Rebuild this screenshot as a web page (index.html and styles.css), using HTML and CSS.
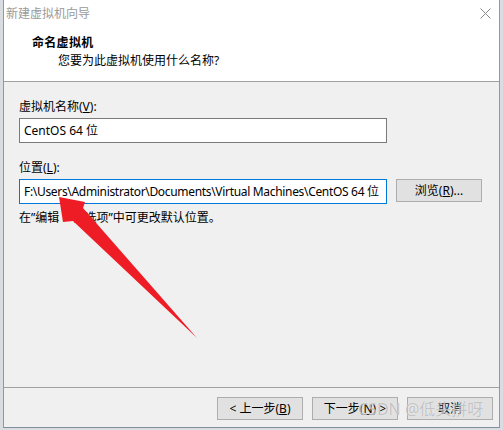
FILE: index.html
```html
<!DOCTYPE html>
<html lang="zh-CN">
<head>
<meta charset="utf-8">
<title>新建虚拟机向导</title>
<link rel="stylesheet" href="styles.css">
</head>
<body>
<div class="screen">
  <div class="window">
    <div class="titlebar">
      <span class="title-text">新建虚拟机向导</span>
      <svg class="close" width="11" height="11" viewBox="0 0 11 11"><path d="M0.5 0.5 L10.5 10.5 M10.5 0.5 L0.5 10.5" stroke="#8a8a8a" stroke-width="1" fill="none"/></svg>
    </div>
    <div class="header">
      <div class="header-title">命名虚拟机</div>
      <div class="header-sub">您要为此虚拟机使用什么名称?</div>
    </div>
    <div class="content">
      <div class="field">
        <div class="label">虚拟机名称(<u>V</u>):</div>
        <div class="input">CentOS 64 位</div>
      </div>
      <div class="field field-loc">
        <div class="label">位置(<u>L</u>):</div>
        <div class="row">
          <div class="input focus">F:\Users\Administrator\Documents\Virtual Machines\CentOS 64 位</div>
          <div class="btn browse">浏览(<u>R</u>)...</div>
        </div>
      </div>
      <div class="hint">在”编辑 &gt; 首选项”中可更改默认位置。</div>
    </div>
    <div class="footer">
      <div class="btn">&lt; 上一步(<u>B</u>)</div>
      <div class="btn">下一步(<u>N</u>) &gt;</div>
      <div class="btn">取消</div>
    </div>
  </div>
  <svg class="arrow" width="503" height="430" viewBox="0 0 503 430">
    <polygon points="59,197 85,202 83,208 197,338 73,221 63,222" fill="#ee1c25"/>
  </svg>
  <div class="watermark">CSDN @低头拼呀</div>
</div>
</body>
</html>
```
FILE: styles.css
```css
html, body {
  margin: 0;
  padding: 0;
}
body {
  width: 503px;
  height: 430px;
  overflow: hidden;
  font-family: "Noto Sans", "Noto Sans CJK SC", sans-serif;
  font-size: 12px;
  color: #000;
}
.screen {
  position: relative;
  width: 503px;
  height: 430px;
  background: #d9dde2;
}
.window {
  position: absolute;
  left: 3px;
  top: 0;
  width: 495px;
  height: 427px;
  border-left: 1px solid #8d9aa6;
  border-right: 1px solid #8d9aa6;
  border-bottom: 1px solid #7f8e9c;
  background: #f0f0f0;
  display: flex;
  flex-direction: column;
}
.titlebar {
  height: 27px;
  background: #fff;
  display: flex;
  align-items: center;
  justify-content: space-between;
  padding: 0 8px 1px 2px;
}
.title-text {
  color: #999;
  line-height: 16px;
}
.close {
  display: block;
  margin-top: -1px;
}
.header {
  height: 53px;
  background: #fff;
  border-bottom: 1px solid #a0a0a0;
  box-sizing: content-box;
  padding-top: 0;
}
.header-title {
  font-weight: bold;
  padding-left: 28px;
  line-height: 16px;
  margin-top: 7px;
  letter-spacing: 0.3px;
}
.header-sub {
  padding-left: 54px;
  line-height: 16px;
  margin-top: 2px;
}
.content {
  flex: 1;
  padding: 17px 0 0 15px;
  border-bottom: 1px solid #a0a0a0;
}
.label {
  line-height: 16px;
  margin-bottom: 3px;
}
.input {
  box-sizing: border-box;
  width: 368px;
  height: 25px;
  border: 1px solid #7a7a7a;
  background: #fff;
  padding: 0 4px;
  line-height: 23px;
  white-space: nowrap;
  overflow: hidden;
}
.input.focus {
  border-color: #0078d7;
  padding: 0 2px 0 4px;
  letter-spacing: -0.32px;
}
.field-loc {
  margin-top: 17px;
}
.row {
  display: flex;
  gap: 9px;
}
.btn {
  box-sizing: border-box;
  width: 86px;
  height: 23px;
  border: 1px solid #adadad;
  background: #e1e1e1;
  display: flex;
  align-items: center;
  justify-content: center;
  line-height: 16px;
}
.browse {
  height: 23px;
}
.hint {
  margin-top: 6px;
  line-height: 16px;
}
.footer {
  height: 39px;
  display: flex;
  justify-content: flex-end;
  align-items: flex-start;
  gap: 9px;
  padding: 9px 6px 0 0;
  box-sizing: border-box;
}
.arrow {
  position: absolute;
  left: 0;
  top: 0;
  pointer-events: none;
}
.watermark {
  position: absolute;
  left: 358px;
  top: 399px;
  font-size: 16px;
  line-height: 20px;
  color: rgba(150, 150, 150, 0.55);
  text-shadow: 0 0 1px rgba(255,255,255,0.9);
  pointer-events: none;
}
```
